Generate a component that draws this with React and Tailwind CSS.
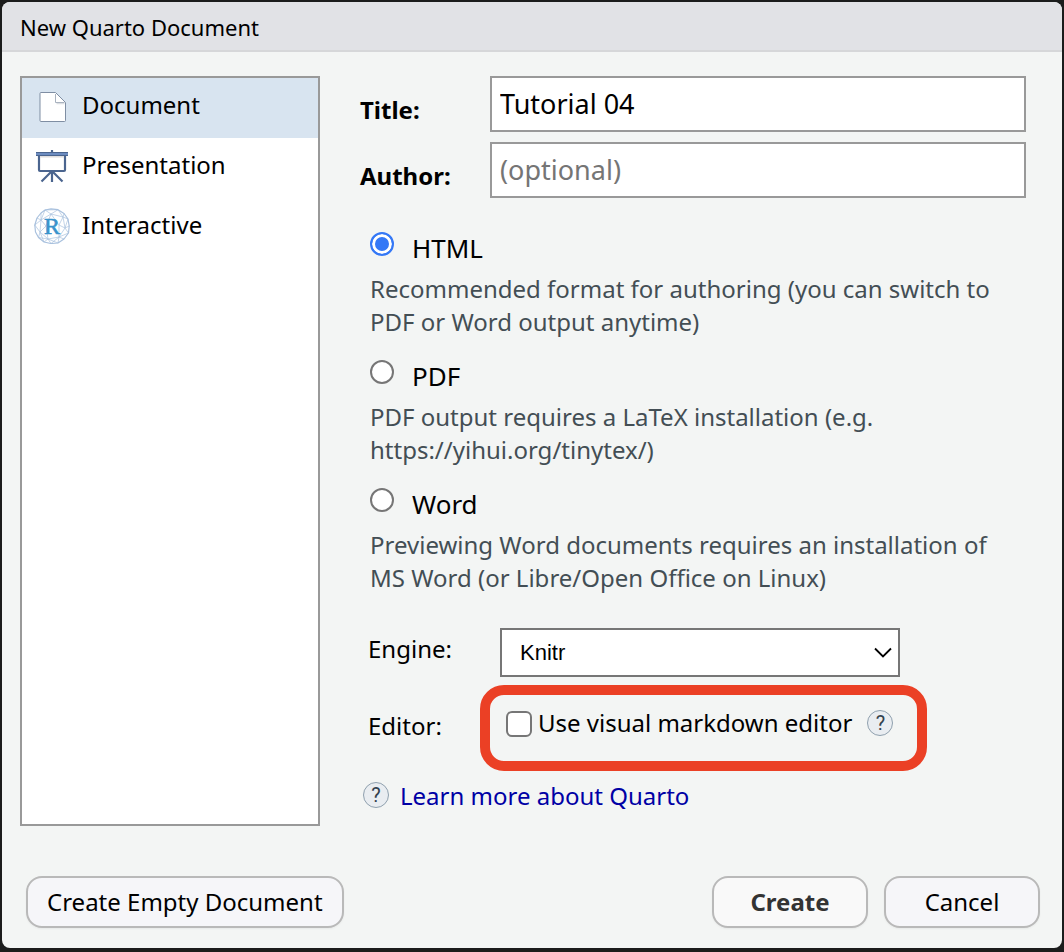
import { useState } from "react";

const documentTypes = [
  { name: "Document", Icon: DocumentIcon },
  { name: "Presentation", Icon: PresentationIcon },
  { name: "Interactive", Icon: ShinyIcon },
];

const formats = [
  {
    id: "html",
    name: "HTML",
    text: "Recommended format for authoring (you can switch to PDF or Word output anytime)",
  },
  {
    id: "pdf",
    name: "PDF",
    text: "PDF output requires a LaTeX installation (e.g. https://yihui.org/tinytex/)",
  },
  {
    id: "word",
    name: "Word",
    text: "Previewing Word documents requires an installation of MS Word (or Libre/Open Office on Linux)",
  },
];

function DocumentIcon() {
  return (
    <svg viewBox="0 0 36 36" className="size-9 shrink-0" aria-hidden="true">
      <path d="M7 4.500H21.500L31.500 14.500V32.500a1 1 0 0 1-1 1H7a1 1 0 0 1-1-1V5.500a1 1 0 0 1 1-1Z" fill="#fff" stroke="#7f8ea3" />
      <path d="M22.500 15.500h8" stroke="#dcdfe3" strokeWidth="1.500" />
      <path d="M21.500 6v8.500h9" fill="none" stroke="#a9b2bf" />
    </svg>
  );
}

function PresentationIcon() {
  return (
    <svg viewBox="0 0 36 36" className="size-9 shrink-0" aria-hidden="true">
      <path d="M18 23 7.500 33.500M18 23 28.500 33.500M18 22v12M18 2v4" fill="none" stroke="#4b658f" strokeWidth="2.200" />
      <rect x="5" y="5" width="26" height="18" rx="1" fill="#fff" stroke="#4b658f" strokeWidth="2.200" />
      <path d="M6 8.500h24" stroke="#e0dede" strokeWidth="2" />
      <rect x="2" y="4" width="32" height="4" fill="#6c8cc0" />
      <path d="M2 4.500h32M2 7.500h32" stroke="#4b658f" />
    </svg>
  );
}

function ShinyIcon() {
  return (
    <svg viewBox="0 0 36 36" className="size-9 shrink-0" aria-hidden="true">
      <g fill="none" stroke="#a9c1de" strokeWidth="0.7" strokeLinejoin="round">
        <path
          d="M17 .8 24 1.700 30 5.500 34 11 35.200 18 34.500 25 30 31 24 35 17 35.500 10 34 4.500 29.500 1.500 24 .8 17 3 10 7 5 11 2Z"
          strokeWidth="1.200"
        />
        <path d="M11 2 24 1.700 29 9 34 11 31 20 34.500 25 25 29 24 35 14 31 10 34 6 24 .8 17 7 12 11 2 17 6 24 1.700M7 5 7 12 17 6 29 9 30 5.500M7 12 3 10M7 12 6 24 14 31 25 29 31 20 29 9M6 24 4.500 29.500 14 31 17 35.500 25 29 30 31M7 12 12 18 6 24M12 18 14 31M17 6 12 18M29 9 25 17 31 20M17 6 25 17 25 29M31 20 35.200 18" />
      </g>
      <text x="18" y="26" textAnchor="middle" fill="#3a93cb" stroke="#3a93cb" strokeWidth="0.6" fontSize="24" fontFamily="'Liberation Serif', serif">
        R
      </text>
    </svg>
  );
}

function HelpBadge() {
  return (
    <span className="flex size-[26px] shrink-0 items-center justify-center rounded-full border border-[#8fa0ae] bg-[#e9edf1] font-[Roboto,sans-serif] text-xl leading-none text-[#32414e]">
      ?
    </span>
  );
}

export default function App() {
  const [type, setType] = useState("Document");
  const [format, setFormat] = useState("html");
  const [title, setTitle] = useState("Tutorial 04");
  const [author, setAuthor] = useState("");
  const [visual, setVisual] = useState(false);

  return (
    <div className="flex min-h-screen flex-col bg-[#1b1c1c] p-0.5 pb-1 font-['Noto_Sans',sans-serif] text-2xl text-black">
      <main className="flex flex-1 flex-col overflow-hidden rounded-lg bg-[#f3f5f4]">
        <header className="border-b-2 border-[#d6d7d9] bg-[#e1e2e6] px-[18px] pt-[9px] pb-[7px]">
          <h1 className="text-[22px] leading-8">New Quarto Document</h1>
        </header>

        <form className="flex flex-1 flex-col" onSubmit={(e) => e.preventDefault()}>
          <div className="flex flex-1 gap-10 pt-6 pr-9 pl-[18px]">
            <nav className="w-[300px] shrink-0 border-2 border-[#999] bg-white" aria-label="Document type">
              {documentTypes.map(({ name, Icon }) => (
                <button
                  key={name}
                  type="button"
                  aria-pressed={type === name}
                  onClick={() => setType(name)}
                  className={`flex h-[60px] w-full items-center gap-3 px-3 pb-1 text-left ${type === name ? "bg-[#d8e4f0]" : "bg-white"}`}
                >
                  <Icon />
                  <span className="pb-0.5">{name}</span>
                </button>
              ))}
            </nav>

            <div className="min-w-0 flex-1">
              <div className="flex flex-col gap-2.5">
                <div className="flex">
                  <label htmlFor="title" className="flex w-[130px] shrink-0 items-center pt-3 font-bold">
                    Title:
                  </label>
                  <input
                    id="title"
                    type="text"
                    value={title}
                    onChange={(e) => setTitle(e.target.value)}
                    className="h-14 min-w-0 flex-1 border-2 border-[#999] bg-white px-2 pb-0.5 text-[27px] outline-none"
                  />
                </div>
                <div className="flex">
                  <label htmlFor="author" className="flex w-[130px] shrink-0 items-center pt-3 font-bold">
                    Author:
                  </label>
                  <input
                    id="author"
                    type="text"
                    placeholder="(optional)"
                    value={author}
                    onChange={(e) => setAuthor(e.target.value)}
                    className="h-14 min-w-0 flex-1 border-2 border-[#999] bg-white px-2 pb-0.5 text-[27px] outline-none placeholder:text-[#757575]"
                  />
                </div>
              </div>

              <div className="flex flex-col gap-[22px] pt-[34px] pb-[34px] pl-2.5" role="radiogroup" aria-label="Output format">
                {formats.map((f) => (
                  <div key={f.id}>
                    <div className="flex items-start gap-[18px] pb-2">
                      <input
                        id={f.id}
                        type="radio"
                        name="format"
                        checked={format === f.id}
                        onChange={() => setFormat(f.id)}
                        className="size-6 shrink-0 appearance-none rounded-full border-2 border-[#767676] bg-white checked:border-[#3478f6] checked:bg-[#3478f6] checked:shadow-[inset_0_0_0_3px_#fff]"
                      />
                      <label htmlFor={f.id} className="text-[26px] leading-8">
                        {f.name}
                      </label>
                    </div>
                    <p className="leading-[33px] text-[#434e54]">{f.text}</p>
                  </div>
                ))}
              </div>

              <div className="mb-2 flex items-center pl-2">
                <label htmlFor="engine" className="w-[132px] shrink-0 pb-2">
                  Engine:
                </label>
                <div className="grid w-[400px] items-center">
                  <select
                    id="engine"
                    className="col-start-1 row-start-1 h-[49px] w-full appearance-none border-2 border-[#767676] bg-white px-[18px] font-['Liberation_Sans',sans-serif] text-[22px]"
                  >
                    <option>Knitr</option>
                    <option>Jupyter</option>
                  </select>
                  <svg viewBox="0 0 18 12" className="pointer-events-none col-start-1 row-start-1 mr-2 h-3 w-[18px] justify-self-end" aria-hidden="true">
                    <path d="M1 1.500 9 9.500 17 1.500" fill="none" stroke="#000" strokeWidth="1.800" />
                  </svg>
                </div>
              </div>

              <div className="flex items-center pl-2">
                <span className="w-28 shrink-0 pb-1">Editor:</span>
                <div className="flex h-[86px] items-center rounded-3xl border-10 border-[#eb4025] pr-6 pb-2 pl-4">
                  <input
                    id="visual"
                    type="checkbox"
                    checked={visual}
                    onChange={() => setVisual(!visual)}
                    className="size-[26px] shrink-0 appearance-none rounded-md border-2 border-[#767676] bg-white checked:bg-[#3478f6]"
                  />
                  <label htmlFor="visual" className="pr-[15px] pb-0.5 pl-1.5">
                    Use visual markdown editor
                  </label>
                  <button type="button" aria-label="Help on the visual editor" className="pb-0.5">
                    <HelpBadge />
                  </button>
                </div>
              </div>

              <a href="#learn" className="mt-[7px] flex items-center gap-[11px] pl-[3px] text-[#0000a5]">
                <HelpBadge />
                <span className="pt-0.5">Learn more about Quarto</span>
              </a>
            </div>
          </div>

          <footer className="flex gap-4 px-6 pt-[50px] pb-5 pr-[22px]">
            <button type="button" className="mr-auto h-[52px] rounded-2xl border-2 border-[#b9b9b9] bg-[#f6f6f9] px-[19px] shadow-xs">
              Create Empty Document
            </button>
            <button type="submit" className="h-[52px] w-[156px] rounded-2xl border-2 border-[#b9b9b9] bg-[#f9f9f9] font-bold text-[#333] shadow-xs">
              Create
            </button>
            <button type="button" className="h-[52px] w-[156px] rounded-2xl border-2 border-[#b9b9b9] bg-[#f6f6f9] shadow-xs">
              Cancel
            </button>
          </footer>
        </form>
      </main>
    </div>
  );
}
